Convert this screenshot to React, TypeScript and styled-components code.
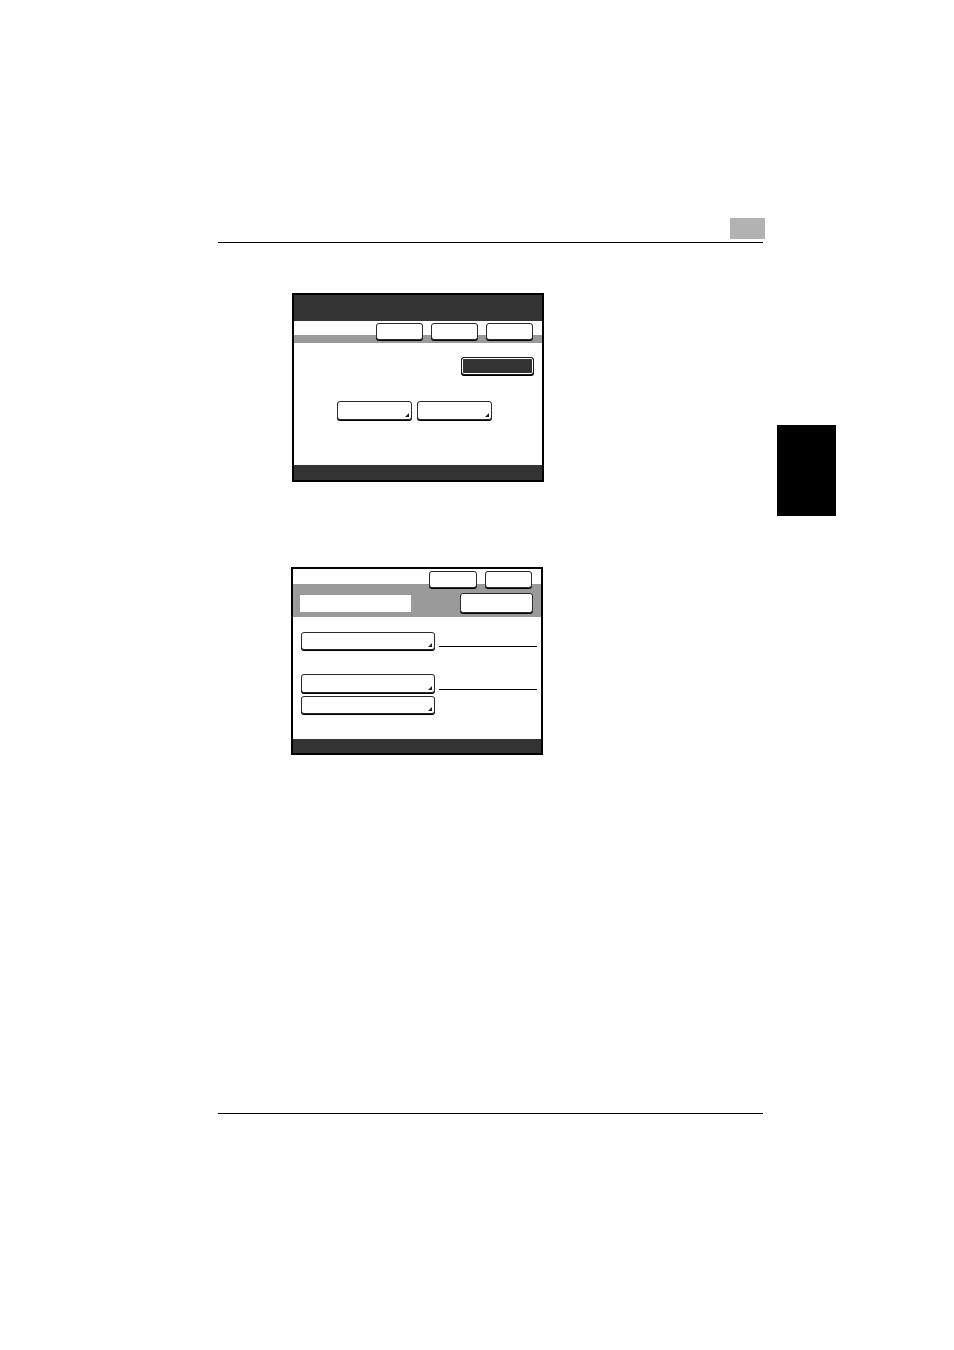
import styled, { createGlobalStyle } from "styled-components";

const GlobalStyle = createGlobalStyle`
  body {
    margin: 0;
    background: #fff;
    font-family: "Liberation Sans", Arial, sans-serif;
  }
`;

const DARK = "#333333";
const BAND = "#9a9a9a";

export default function App() {
  return (
    <Page>
      <GlobalStyle />

      <Header>
        <ChapterBox />
        <Rule />
      </Header>

      <Body>
        <Column>
          {/* first panel */}
          <Screen $top={50} $left={74} $height={189}>
            <TitleBar />
            <TabRow>
              <Key $w={47} />
              <Key $w={47} />
              <Key $w={47} />
            </TabRow>
            <Panel1Body>
              <DarkKey />
              <KeyPair>
                <Key $w={75} $h={19} $menu />
                <Key $w={75} $h={19} $menu />
              </KeyPair>
            </Panel1Body>
            <StatusBar $h={15} />
          </Screen>

          {/* second panel */}
          <Screen $top={85} $left={73} $height={188}>
            <Head2>
              <TopKeys>
                <Key $w={48} />
                <Key $w={47} />
              </TopKeys>
              <FieldRow>
                <Field />
                <Key $w={73} $h={20} />
              </FieldRow>
            </Head2>
            <Panel2Body>
              <ListRow $gap={0}>
                <Key $w={134} $h={18} $menu />
                <Leader />
              </ListRow>
              <ListRow $gap={24}>
                <Key $w={134} $h={19} $menu />
                <Leader />
              </ListRow>
              <ListRow $gap={3}>
                <Key $w={134} $h={18} $menu />
              </ListRow>
            </Panel2Body>
            <StatusBar $h={14} />
          </Screen>
        </Column>

        <ThumbTab />
      </Body>

      <FooterRule />
    </Page>
  );
}

const Page = styled.div`
  width: 954px;
  height: 1350px;
  display: flex;
  flex-direction: column;
  overflow: hidden;
`;

const Header = styled.header`
  margin-left: 218px;
  width: 547px;
  padding-top: 218px;
  display: flex;
  flex-direction: column;
`;

const ChapterBox = styled.div`
  width: 35px;
  height: 21px;
  margin-left: auto;
  background: #b2b2b2;
`;

const Rule = styled.div`
  width: 545px;
  height: 1px;
  margin-top: 3px;
  background: #000;
`;

const Body = styled.section`
  display: flex;
  margin-left: 218px;
`;

const Column = styled.div`
  width: 559px;
  display: flex;
  flex-direction: column;
`;

const ThumbTab = styled.div`
  width: 59px;
  height: 91px;
  margin-top: 182px;
  background: #000;
`;

const FooterRule = styled.div`
  width: 545px;
  height: 1px;
  margin: 358px 0 0 218px;
  background: #000;
`;

const Screen = styled.div<{ $top: number; $left: number; $height: number }>`
  box-sizing: border-box;
  width: 252px;
  height: ${(p) => p.$height}px;
  margin: ${(p) => p.$top}px 0 0 ${(p) => p.$left}px;
  border: 2px solid #000;
  display: flex;
  flex-direction: column;
  background: #fff;
`;

const TitleBar = styled.div`
  height: 26px;
  background: ${DARK};
`;

const StatusBar = styled.div<{ $h: number }>`
  height: ${(p) => p.$h}px;
  margin-top: auto;
  background: ${DARK};
`;

const TabRow = styled.div`
  height: 22px;
  box-sizing: border-box;
  padding: 2px 9px 0 0;
  display: flex;
  justify-content: flex-end;
  gap: 8px;
  background: linear-gradient(#fff 0 14px, ${BAND} 14px 100%);
`;

const Key = styled.div<{ $w: number; $h?: number; $menu?: boolean }>`
  position: relative;
  box-sizing: border-box;
  width: ${(p) => p.$w}px;
  height: ${(p) => p.$h ?? 17}px;
  flex-shrink: 0;
  background: #fff;
  border: 1px solid #2a2a2a;
  border-radius: 3px;
  box-shadow: 0 1px 0 #000;

  &::after {
    content: "";
    display: ${(p) => (p.$menu ? "block" : "none")};
    position: absolute;
    right: 2px;
    bottom: 2px;
    width: 0;
    height: 0;
    border-left: 4px solid transparent;
    border-bottom: 4px solid #222;
  }
`;

const DarkKey = styled.div`
  box-sizing: border-box;
  width: 73px;
  height: 18px;
  align-self: flex-end;
  background: ${DARK};
  border: 1px solid #1a1a1a;
  border-radius: 3px;
  box-shadow: inset 0 0 0 1px #fff, 0 1px 0 #000;
`;

const Panel1Body = styled.div`
  padding: 14px 8px 0 0;
  display: flex;
  flex-direction: column;
`;

const KeyPair = styled.div`
  display: flex;
  gap: 5px;
  margin: 26px 0 0 43px;
`;

const Head2 = styled.div`
  height: 48px;
  box-sizing: border-box;
  display: flex;
  flex-direction: column;
  background: linear-gradient(#fff 0 15px, ${BAND} 15px 100%);
`;

const TopKeys = styled.div`
  display: flex;
  justify-content: flex-end;
  gap: 8px;
  padding: 2px 9px 0 0;
`;

const FieldRow = styled.div`
  display: flex;
  justify-content: space-between;
  align-items: center;
  margin-top: 5px;
  padding: 0 8px 0 7px;
`;

const Field = styled.div`
  width: 111px;
  height: 17px;
  background: #fff;
`;

const Panel2Body = styled.div`
  padding: 15px 0 0 8px;
  display: flex;
  flex-direction: column;
`;

const ListRow = styled.div<{ $gap: number }>`
  display: flex;
  align-items: flex-end;
  margin-top: ${(p) => p.$gap}px;
`;

const Leader = styled.div`
  width: 98px;
  height: 1px;
  margin: 0 0 3px 4px;
  background: #000;
`;
